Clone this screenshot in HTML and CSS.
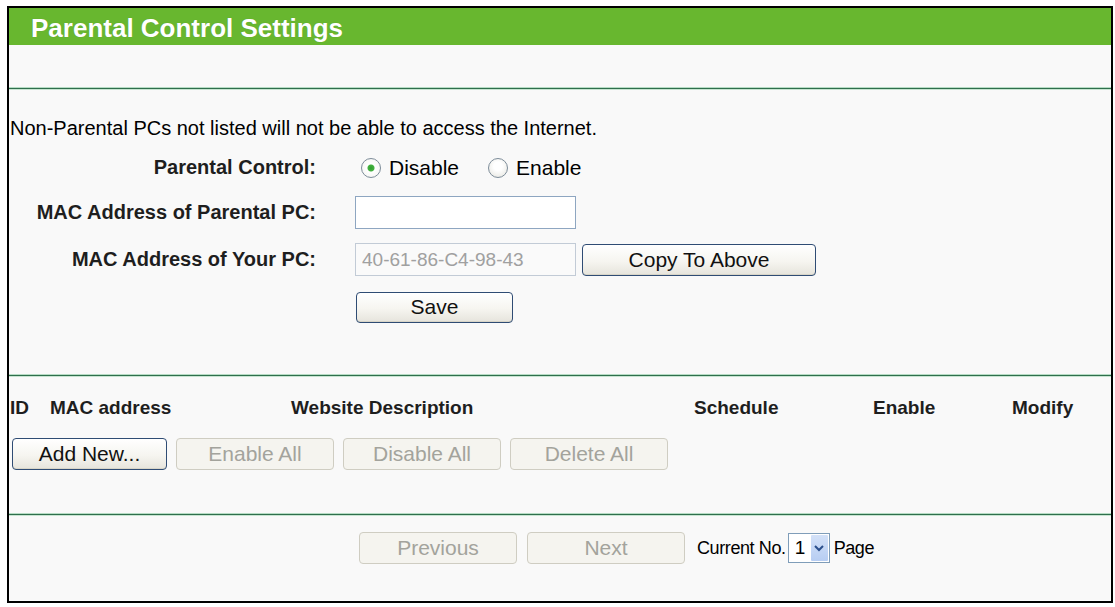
FILE: index.html
```html
<!DOCTYPE html>
<html>
<head>
<meta charset="utf-8">
<title>Parental Control Settings</title>
<link rel="stylesheet" href="styles.css">
</head>
<body>
<div class="frame">
  <div class="title-bar">Parental Control Settings</div>
  <div class="top-space"></div>
  <div class="rule"></div>
  <p class="note">Non-Parental PCs not listed will not be able to access the Internet.</p>
  <div class="form-grid">
    <div class="label">Parental Control:</div>
    <div class="ctrl">
      <label class="radio"><input type="radio" name="pc" checked><span>Disable</span></label>
      <label class="radio"><input type="radio" name="pc"><span>Enable</span></label>
    </div>
    <div class="label">MAC Address of Parental PC:</div>
    <div class="ctrl"><input class="text" type="text" value=""></div>
    <div class="label">MAC Address of Your PC:</div>
    <div class="ctrl">
      <input class="text" type="text" value="40-61-86-C4-98-43" disabled>
      <button class="btn btn-copy">Copy To Above</button>
    </div>
    <div class="label"></div>
    <div class="ctrl"><button class="btn btn-save">Save</button></div>
  </div>
  <div class="rule rule-mid"></div>
  <div class="list-head">
    <span>ID</span>
    <span>MAC address</span>
    <span>Website Description</span>
    <span>Schedule</span>
    <span>Enable</span>
    <span>Modify</span>
  </div>
  <div class="list-actions">
    <button class="btn btn-wide">Add New...</button>
    <button class="btn btn-wide" disabled>Enable All</button>
    <button class="btn btn-wide" disabled>Disable All</button>
    <button class="btn btn-wide" disabled>Delete All</button>
  </div>
  <div class="rule rule-low"></div>
  <div class="pager">
    <button class="btn btn-wide" disabled>Previous</button>
    <button class="btn btn-wide" disabled>Next</button>
    <span class="pager-text">Current No.</span>
    <div class="fake-select">
      <span class="sel-value">1</span>
      <span class="sel-arrow"><svg width="10" height="8" viewBox="0 0 10 8"><path d="M1 2 L5 6 L9 2" fill="none" stroke="#2b4f8c" stroke-width="2"/></svg></span>
    </div>
    <span class="pager-text">Page</span>
  </div>
</div>
</body>
</html>
```

FILE: styles.css
```css
html, body {
  margin: 0;
  padding: 0;
  background: #ffffff;
}

body {
  font-family: "Liberation Sans", Arial, sans-serif;
  color: #000;
}

.frame {
  margin: 6px 0 0 7px;
  width: 1106px;
  height: 597px;
  box-sizing: border-box;
  border: 2px solid #000;
  background: #f9f9f9;
}

.title-bar {
  height: 37px;
  background: #68b72f;
  color: #fff;
  font-weight: bold;
  font-size: 26px;
  line-height: 40px;
  padding-left: 22px;
  text-shadow: 0 0 1px rgba(0,0,0,0.15);
}

.top-space {
  height: 42px;
}

.rule {
  height: 3px;
  background: linear-gradient(#b6dcc4 0, #b6dcc4 1px, #2f6f4c 1px, #2f6f4c 2px, #c7e4d1 2px);
}

.note {
  margin: 26px 0 0 1px;
  font-size: 20px;
  line-height: 24px;
}

.form-grid {
  margin-top: 5px;
  display: grid;
  grid-template-columns: 307px 1fr;
  grid-template-rows: 45px 45px 49px 46px;
  column-gap: 39px;
}

.label {
  display: flex;
  align-items: center;
  justify-content: flex-end;
  font-size: 20px;
  font-weight: bold;
  color: #1e1e1e;
}

.ctrl {
  display: flex;
  align-items: center;
  gap: 6px;
}

.radio {
  display: inline-flex;
  align-items: center;
  font-size: 21px;
  margin-left: 6px;
  margin-right: 17px;
}

.radio input {
  appearance: none;
  -webkit-appearance: none;
  width: 20px;
  height: 20px;
  margin: 0 8px 0 0;
  border-radius: 50%;
  border: 1px solid #7d8c99;
  background: radial-gradient(circle at 50% 40%, #ffffff 30%, #e3e3dc 100%);
  box-sizing: border-box;
}

.radio input:checked {
  background: radial-gradient(circle, #2fa12c 0, #44b040 3px, #ffffff 4px, #f2f2ee 100%);
}

.text {
  width: 221px;
  height: 33px;
  box-sizing: border-box;
  border: 1px solid #8ea6c1;
  background: #fff;
  font-family: "Liberation Sans", Arial, sans-serif;
  font-size: 19px;
  padding: 0 6px;
  margin: 0;
}

.text:disabled {
  border-color: #c2cbd6;
  background: #fafafa;
  color: #a0a0a0;
}

.btn {
  font-family: "Liberation Sans", Arial, sans-serif;
  font-size: 21px;
  color: #111;
  height: 32px;
  padding: 0;
  margin: 0;
  border: 1px solid #2f4c74;
  border-radius: 4px;
  background: linear-gradient(#ffffff 0%, #f6f5f0 55%, #e6e4dc 100%);
  box-shadow: inset 0 -1px 0 #d8d5c8;
}

.btn:disabled {
  color: #a3a39c;
  border-color: #cfcdc2;
  background: #f5f4ef;
  box-shadow: none;
}

.btn-copy {
  width: 234px;
  height: 32px;
}

.btn-save {
  width: 157px;
  height: 31px;
  margin-left: 1px;
}

.btn-wide {
  width: 158px;
  height: 32px;
}

.rule-mid {
  margin-top: 44px;
}

.list-head {
  margin-top: 19px;
  display: grid;
  grid-template-columns: 40px 241px 403px 179px 139px auto;
  padding-left: 1px;
  font-size: 19px;
  font-weight: bold;
  line-height: 24px;
  color: #1e1e1e;
}

.list-actions {
  margin-top: 18px;
  padding-left: 3px;
  display: flex;
  gap: 9px;
}

.list-actions .btn:first-child {
  width: 155px;
}

.rule-low {
  margin-top: 43px;
}

.pager {
  margin-top: 16px;
  padding-left: 350px;
  display: flex;
  align-items: center;
  gap: 10px;
}

.pager-text {
  font-size: 18px;
  letter-spacing: -0.4px;
}

.pager .btn-wide:nth-child(2) {
  margin-right: 2px;
}

.fake-select {
  display: flex;
  align-items: stretch;
  height: 30px;
  width: 42px;
  box-sizing: border-box;
  border: 1px solid #7f9db9;
  background: #fff;
  margin: 0 -6px 0 -8px;
}

.sel-value {
  flex: 1;
  font-size: 19px;
  line-height: 28px;
  padding-left: 6px;
}

.sel-arrow {
  width: 17px;
  margin: 1px;
  background: linear-gradient(#d3e1f8, #b7cdf2);
  display: flex;
  align-items: center;
  justify-content: center;
  border-radius: 1px;
}
```
